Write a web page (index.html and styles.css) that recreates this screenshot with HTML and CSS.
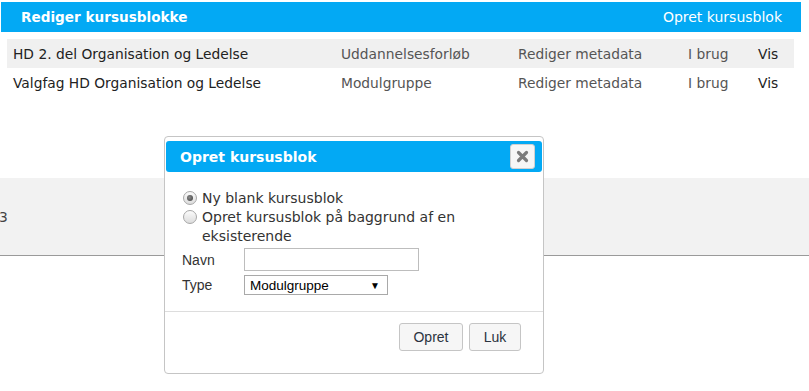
FILE: index.html
```html
<!DOCTYPE html>
<html lang="da">
<head>
<meta charset="utf-8">
<title>Rediger kursusblokke</title>
<link rel="stylesheet" href="styles.css">
</head>
<body>
<div class="page">
  <div class="bar">
    <span class="bar-title">Rediger kursusblokke</span>
    <a class="bar-link">Opret kursusblok</a>
  </div>
  <div class="table">
    <div class="row shaded">
      <span class="c-name">HD 2. del Organisation og Ledelse</span>
      <span class="c-type">Uddannelsesforløb</span>
      <span class="c-meta">Rediger metadata</span>
      <span class="c-use">I brug</span>
      <span class="c-vis">Vis</span>
    </div>
    <div class="row">
      <span class="c-name">Valgfag HD Organisation og Ledelse</span>
      <span class="c-type">Modulgruppe</span>
      <span class="c-meta">Rediger metadata</span>
      <span class="c-use">I brug</span>
      <span class="c-vis">Vis</span>
    </div>
  </div>
  <div class="band"><span class="band-text">3</span></div>
</div>

<div class="dialog">
  <div class="dlg-title">
    <span class="dlg-title-text">Opret kursusblok</span>
    <button class="dlg-close" type="button">
      <svg width="13" height="13" viewBox="0 0 13 13"><path d="M2.5 2.5 L10.5 10.5 M10.5 2.5 L2.5 10.5" stroke="#7b7b7b" stroke-width="3.2" stroke-linecap="round"/></svg>
    </button>
  </div>
  <div class="dlg-body">
    <div class="radio-row">
      <span class="radio checked"></span>
      <span class="radio-label">Ny blank kursusblok</span>
    </div>
    <div class="radio-row">
      <span class="radio"></span>
      <span class="radio-label">Opret kursusblok på baggrund af en eksisterende</span>
    </div>
    <div class="field-row first">
      <span class="field-label">Navn</span>
      <span class="text-input"></span>
    </div>
    <div class="field-row">
      <span class="field-label">Type</span>
      <span class="select"><span class="select-text">Modulgruppe</span><span class="select-arrow">▼</span></span>
    </div>
  </div>
  <div class="dlg-buttons">
    <button class="btn btn-opret" type="button">Opret</button>
    <button class="btn btn-luk" type="button">Luk</button>
  </div>
</div>
</body>
</html>
```
FILE: styles.css
```css
html, body {
  margin: 0;
  padding: 0;
  background: #fff;
}
body {
  font-family: "DejaVu Sans", Verdana, sans-serif;
  font-size: 14px;
  width: 809px;
  height: 391px;
  overflow: hidden;
  position: relative;
}
.page {
  padding-top: 2px;
}
.bar {
  margin-left: 1px;
  width: 800px;
  height: 30px;
  background: #03a9f4;
  display: flex;
  align-items: center;
  justify-content: space-between;
  padding: 0 19px 0 20px;
  box-sizing: border-box;
  color: #fff;
}
.bar-title {
  font-weight: bold;
  font-size: 13.6px;
}
.bar-link {
  font-size: 14px;
}
.table {
  margin: 7px 0 0 7px;
  width: 787px;
}
.row {
  height: 29px;
  display: grid;
  grid-template-columns: 328px 177px 170px 70px 1fr;
  align-items: center;
  padding-left: 6px;
  color: #555;
  font-size: 13.8px;
}
.row.shaded {
  background: #f0f0f0;
}
.c-name, .c-vis {
  color: #222;
}
.band {
  margin-top: 81px;
  height: 77px;
  background: #f2f2f2;
  border-bottom: 1px solid #9a9a9a;
  display: flex;
  align-items: center;
  color: #444;
  font-size: 13.8px;
}
.band-text {
  margin-left: -1px;
}

.dialog {
  position: absolute;
  left: 164px;
  top: 136px;
  width: 378px;
  height: 232px;
  border: 1px solid #c5c5c5;
  border-radius: 4px;
  background: #fff;
  padding: 4px 0 0 0;
  box-sizing: content-box;
}
.dlg-title {
  margin: 0 1px 0 1px;
  height: 31px;
  background: #03a9f4;
  border-radius: 3px;
  display: flex;
  align-items: center;
  justify-content: space-between;
  padding: 0 7px 0 14px;
}
.dlg-title-text {
  color: #fff;
  font-weight: bold;
  font-size: 14px;
}
.dlg-close {
  width: 25px;
  height: 25px;
  padding: 0;
  border: 1px solid #d0d0d0;
  border-radius: 3px;
  background: #f6f6f6;
  display: flex;
  align-items: center;
  justify-content: center;
}
.dlg-body {
  padding: 17px 20px 0 17px;
  height: 122px;
  border-bottom: 1px solid #dddddd;
}
.radio-row {
  display: flex;
  align-items: flex-start;
  color: #333;
  line-height: 19px;
}
.radio {
  flex: none;
  width: 12px;
  height: 12px;
  margin: 2px 5px 0 1px;
  border-radius: 50%;
  border: 1px solid #a7a7a7;
  background: linear-gradient(#fbfbfb, #dcdcdc);
  position: relative;
}
.radio.checked::after {
  content: "";
  position: absolute;
  left: 3px;
  top: 3px;
  width: 6px;
  height: 6px;
  border-radius: 50%;
  background: radial-gradient(circle at 40% 40%, #8a8a8a, #3c3c3c);
}
.radio-label {
  width: 300px;
}
.field-row {
  display: flex;
  align-items: center;
  font-family: "Liberation Sans", Arial, sans-serif;
  font-size: 14px;
  color: #333;
  margin-top: 4px;
}
.field-row.first {
  margin-top: 2px;
}
.field-label {
  width: 62px;
  flex: none;
}
.text-input {
  width: 173px;
  height: 21px;
  border: 1px solid #bdbdbd;
  background: #fff;
}
.select {
  height: 18px;
  border: 1px solid #a9a9a9;
  background: #fff;
  display: flex;
  align-items: center;
  justify-content: space-between;
  padding: 0 7px 0 5px;
  box-sizing: content-box;
  width: 130px;
  font-size: 13.5px;
  color: #000;
}
.select-arrow {
  font-size: 10px;
  color: #000;
}
.dlg-buttons {
  display: flex;
  justify-content: flex-end;
  gap: 6px;
  padding: 11px 22px 0 0;
}
.btn {
  height: 28px;
  border: 1px solid #c5c5c5;
  border-radius: 3px;
  background: #f6f6f6;
  font-family: "Liberation Sans", Arial, sans-serif;
  font-size: 14px;
  color: #2b3340;
  padding: 0;
}
.btn-opret {
  width: 64px;
}
.btn-luk {
  width: 52px;
}
```
